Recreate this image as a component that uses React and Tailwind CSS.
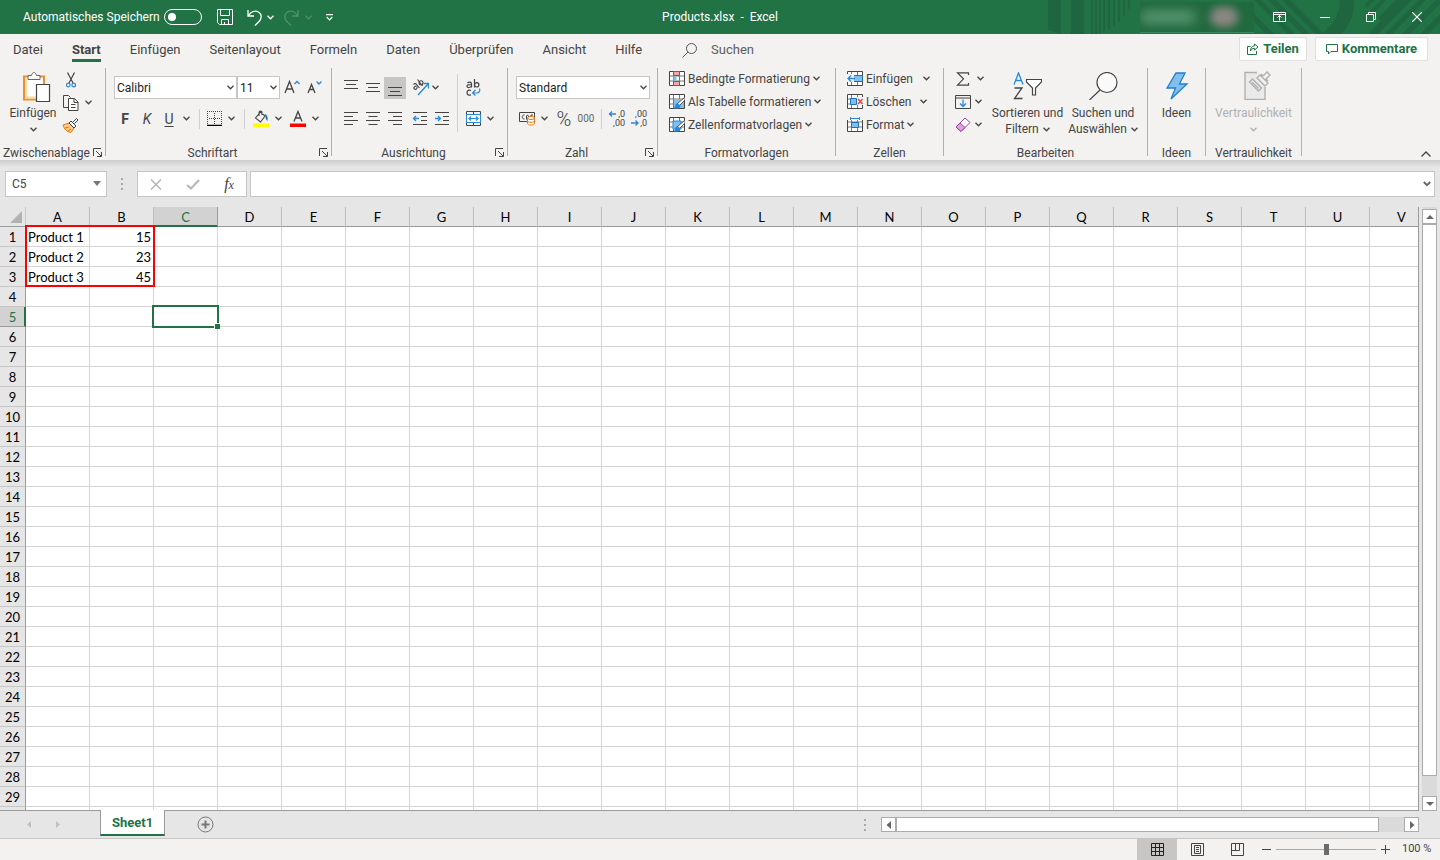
import React from 'react';
import clsx from 'clsx';

const COLUMNS = 'ABCDEFGHIJKLMNOPQRSTUV'.split('');
const FULL_ROWS = 29;
const ROWS = Array.from({ length: FULL_ROWS + 1 }, (_, i) => i + 1);
const DATA = {
  A1: 'Product 1',
  B1: '15',
  A2: 'Product 2',
  B2: '23',
  A3: 'Product 3',
  B3: '45',
};
const TABS = ['Datei', 'Start', 'Einfügen', 'Seitenlayout', 'Formeln', 'Daten', 'Überprüfen', 'Ansicht', 'Hilfe'];

const Chevron = ({ className }) => (
  <svg width="7" height="5" viewBox="0 0 7 5" fill="none" stroke="currentColor" strokeWidth="1.3" className={clsx('shrink-0', className)}>
    <path d="M.5.8l3 3 3-3" />
  </svg>
);

const MenuButton = ({ label, className }) => (
  <button aria-label={label} className={clsx('flex h-[22px] w-3 shrink-0 items-center justify-center', className)}>
    <Chevron />
  </button>
);

const IconButton = ({ label, className, children }) => (
  <button aria-label={label} className={clsx('flex h-[22px] w-[22px] shrink-0 items-center justify-center', className)}>
    {children}
  </button>
);

const Divider = ({ className }) => <div className={clsx('w-px shrink-0 bg-[#d2d0ce]', className)} />;

/* Ribbon group: content, caption, optional dialog launcher, trailing rule */
const Group = ({ title, launcher, className, children }) => (
  <>
    <section className={clsx('flex shrink-0 flex-col', className)}>
      <div className="flex h-[77px]">{children}</div>
      <div className="flex h-[15px] items-center">
        <span className="flex-1 text-center whitespace-nowrap">{title}</span>
        {launcher && (
          <button aria-label={`${title} Optionen`} className="mr-[3px] shrink-0">
            <svg width="9" height="9" viewBox="0 0 9 9" fill="none" stroke="currentColor">
              <path d="M.5 8V.5H8M3 3l5 5M8.500 4v4.500H4" />
            </svg>
          </button>
        )}
      </div>
    </section>
    <div className="h-[88px] w-px shrink-0 bg-[#b3b0ad]" />
  </>
);

const Lines = ({ d }) => (
  <svg width="16" height="16" viewBox="0 0 16 16" fill="none" stroke="#444" className="shrink-0">
    <path d={d} />
  </svg>
);

const GridIcon = ({ children }) => (
  <svg width="16" height="15" viewBox="0 0 16 15" fill="none" className="shrink-0">
    <path d="M.5.500h15v14H.5z" fill="#fff" stroke="#444" />
    <path d="M1 5h14M1 10h14M4.500 1v13M10.500 1v13" stroke="#777" />
    {children}
  </svg>
);

const Brush = () => (
  <>
    <path d="M16 3L8 10l2 2 6-6z" fill="#fff" stroke="#444" strokeWidth=".9" />
    <path d="M9 9.500c-2-.5-3 1-3 2.500 0 1-1 2-2 2.500h4c2.500 0 4-1.500 3-3.500z" fill="#2b88d8" />
  </>
);

const TitlePattern = () => (
  <svg className="absolute top-0 right-0" width="400" height="34" viewBox="0 0 400 34" aria-hidden="true">
    <g fill="#1f6540">
      <path d="M8 0h13v34l-13-4zM31 0h13v34H31zM51 0h2v34h-2zM55 0h2v34h-2zM59 0h2v33h-2zM63 0h2v31h-2zM68 0h2v29h-2zM73 0h2v26h-2zM78 0h2v22h-2zM83 0h2v16h-2zM88 0h2v9h-2z" />
      <path d="M214 0h7l34 34h-7zM228 0h8l34 34h-8zM242 0h8l34 34h-8zM214 14l20 20h-8l-12-12zM300 0h14c1 14-4 25-13 34h-20c12-8 19-20 19-34z" />
      <path d="M325 4l5-4h5l-9 8zM330 11l11-11h5L333 14zM338 18l18-18h6l-21 21zM328 34l34-34h10l-34 34zM345 34l34-34h7l-34 34zM362 34l34-34h4v4l-30 30zM380 34l20-20v8l-12 12z" />
    </g>
  </svg>
);

const TitleBar = () => (
  <header className="relative flex h-[34px] shrink-0 items-center bg-[#217346] text-white">
    <TitlePattern />
    <div className="flex flex-1 items-center">
      <label htmlFor="autosave" className="ml-[23px] w-[141px] whitespace-nowrap">Automatisches Speichern</label>
      <span className="relative flex h-4 w-[38px] items-center">
        <input id="autosave" type="checkbox" className="h-4 w-[38px] appearance-none rounded-full border border-white" />
        <span className="pointer-events-none absolute left-1 h-2 w-2 rounded-full bg-white" />
      </span>
      <IconButton label="Speichern" className="ml-3">
        <svg width="16" height="16" viewBox="0 0 16 16" fill="none" stroke="#fff">
          <path d="M.5.500h15v15h-13l-2-2zM3.500.5v6h9v-6M4.500 15.500v-5h7v5M7.500 13v2.500" />
        </svg>
      </IconButton>
      <IconButton label="Rückgängig" className="ml-2">
        <svg width="16" height="17" viewBox="0 0 16 17" fill="none" stroke="#fff" strokeWidth="1.3">
          <path d="M1 1v6h6M1.500 6.500C4 3 8 1 11.500 3c4 2.500 3 7 .5 9.500L8 16.500" />
        </svg>
      </IconButton>
      <MenuButton label="Rückgängig-Liste" className="-ml-0.5" />
      <IconButton label="Wiederholen" className="ml-1 text-[#4f9069]">
        <svg width="16" height="17" viewBox="0 0 16 17" fill="none" stroke="currentColor" strokeWidth="1.3">
          <path d="M15 1v6H9M14.500 6.500C12 3 8 1 4.500 3c-4 2.500-3 7-.5 9.500L8 16.500" />
        </svg>
      </IconButton>
      <MenuButton label="Wiederholen-Liste" className="text-[#4f9069]" />
      <IconButton label="Symbolleiste anpassen" className="ml-1">
        <svg width="7" height="7" viewBox="0 0 7 7" fill="none" stroke="#fff" strokeWidth="1.2">
          <path d="M0 .6h7M.7 3l2.800 2.800L6.300 3" />
        </svg>
      </IconButton>
    </div>
    <h1 className="whitespace-pre">Products.xlsx  -  Excel</h1>
    <div className="relative flex flex-1 items-center justify-end">
      <div className="mr-0.5 flex h-[31px] w-[114px] items-center justify-between overflow-hidden border-b border-[#398a5e] bg-[#21693f] pr-4">
        <span className="h-3 w-14 rounded-full bg-[#5d9a76] blur-[6px]" />
        <span className="h-5 w-7 rounded-full bg-[#8b8782] blur-[4px]" />
      </div>
      <button aria-label="Menübandoptionen" className="flex h-[34px] w-[46px] items-center justify-center">
        <svg width="13" height="10" viewBox="0 0 13 10" fill="none" stroke="#fff">
          <path d="M.5.500h12v9H.5zM.5 2.500h12M6.500 8.500v-5M4.500 5.500l2-2 2 2" />
        </svg>
      </button>
      <button aria-label="Minimieren" className="flex h-[34px] w-[46px] items-center justify-center">
        <svg width="10" height="1"><path d="M0 .5h10" stroke="#fff" /></svg>
      </button>
      <button aria-label="Wiederherstellen" className="flex h-[34px] w-[46px] items-center justify-center">
        <svg width="10" height="10" viewBox="0 0 10 10" fill="none" stroke="#fff">
          <path d="M.5 2.500h7v7h-7zM2.500 2.500v-2h7v7h-2" />
        </svg>
      </button>
      <button aria-label="Schließen" className="flex h-[34px] w-[46px] items-center justify-center">
        <svg width="10" height="10" viewBox="0 0 10 10" stroke="#fff" strokeWidth="1.200"><path d="M0 0l10 10M10 0L0 10" /></svg>
      </button>
    </div>
  </header>
);

const TabBar = () => (
  <nav className="flex h-[34px] shrink-0 items-start pl-[13px] text-[13px]">
    <div className="flex flex-1 items-start gap-[29px]">
      {TABS.map((tab) => (
        <a
          key={tab}
          href="#"
          className={clsx(
            'mt-1 h-6 border-b-3 whitespace-nowrap leading-6',
            tab === 'Start' ? 'border-[#217346] font-bold' : 'border-transparent'
          )}
        >
          {tab}
        </a>
      ))}
      <label className="mt-1 ml-[11px] flex h-6 items-center gap-[14px]">
        <svg width="15" height="15" viewBox="0 0 15 15" fill="none" stroke="#555">
          <circle cx="9.500" cy="5.500" r="5" />
          <path d="M6 9L.5 14.500" />
        </svg>
        <input aria-label="Suchen" placeholder="Suchen" className="w-24 bg-transparent outline-none placeholder:text-[#605e5c]" />
      </label>
    </div>
    <div className="mt-[3px] mr-3 flex gap-2 font-bold text-[#217346]">
      <button className="flex h-6 w-[68px] items-center justify-center gap-1 rounded-xs border border-[#e1dfdd] bg-white">
        <svg width="12" height="12" viewBox="0 0 12 12" fill="none" stroke="currentColor">
          <path d="M3.500 3.500h-3v8h9V8M7.500 1l3.500 3-3.500 3V5.300C5 5.300 4 6.500 3.500 8c0-3 1.500-5 4-5.200z" />
        </svg>
        Teilen
      </button>
      <button className="flex h-6 w-[113px] items-center justify-center gap-1 rounded-xs border border-[#e1dfdd] bg-white">
        <svg width="12" height="12" viewBox="0 0 12 12" fill="none" stroke="currentColor">
          <path d="M.5 1.500h11v7H5l-2.500 2.500V8.500h-2z" />
        </svg>
        Kommentare
      </button>
    </div>
  </nav>
);

const Select = ({ label, value, className }) => (
  <span className={clsx('relative flex h-[23px] shrink-0 items-center', className)}>
    <select aria-label={label} className="h-full w-full appearance-none border border-[#c8c6c4] bg-white pl-[2px] text-[#222]">
      <option>{value}</option>
    </select>
    <Chevron className="pointer-events-none absolute right-[3px]" />
  </span>
);

const ClipboardGroup = () => (
  <Group title="Zwischenablage" launcher className="w-[105px]">
    <button className="flex w-[66px] flex-col items-center pt-1">
      <svg width="28" height="30" viewBox="0 0 28 30" fill="none" className="ml-[7px]">
        <path d="M1 4.500h20v23H1z" fill="#fff" stroke="#e8912d" strokeWidth="2" />
        <path d="M3 6.500v19h16" stroke="#fbd9a0" strokeWidth="2" />
        <path d="M5 7.500v-4h3.500C9 1.500 10 .5 11 .5s2 1 2.500 3H17v4z" fill="#fff" stroke="#666" />
        <path d="M13.500 12.500h13v17h-13z" fill="#fff" stroke="#444" strokeWidth="1.200" />
      </svg>
      <span className="mt-[3px] leading-4">Einfügen</span>
      <Chevron className="mt-[6px]" />
    </button>
    <div className="flex flex-col">
      <div className="flex h-[23px] items-center">
        <button aria-label="Ausschneiden">
          <svg width="10" height="16" viewBox="0 0 10 16" fill="none">
            <path d="M1.500.5L7 11M8.500.5L3 11" stroke="#444" strokeWidth="1.200" />
            <circle cx="2.300" cy="13" r="1.800" stroke="#2b88d8" strokeWidth="1.200" />
            <circle cx="7.700" cy="13" r="1.800" stroke="#2b88d8" strokeWidth="1.200" />
          </svg>
        </button>
      </div>
      <div className="flex h-[23px] items-center">
        <button aria-label="Kopieren" className="-ml-1">
          <svg width="17" height="16" viewBox="0 0 17 16" fill="none" stroke="#444">
            <path d="M6.500 12.500h-5V.5h5l2 2" />
            <path d="M6.500 3.500h6l3.500 3.500v8.500H6.500zM12 3.500v4h4M9 9.500h4.500M9 12.500h4.500" fill="#fff" />
          </svg>
        </button>
        <MenuButton label="Kopieroptionen" className="ml-[3px]" />
      </div>
      <div className="flex h-[23px] items-center">
        <button aria-label="Format übertragen" className="-ml-1">
          <svg width="17" height="15" viewBox="0 0 17 15" fill="none">
            <path d="M1 7l6-2 5 5-3 4.500c-4-.5-7-3.500-8-7.500z" fill="#fbc98b" stroke="#e07a10" />
            <path d="M3 10l4-1M6 13l3-2" stroke="#e07a10" />
            <path d="M7 5l2-2 5 5-2 2zM11 4l3.500-3.500L16 2l-3.500 3.500" fill="#fff" stroke="#444" />
          </svg>
        </button>
      </div>
    </div>
  </Group>
);

const FontGroup = () => (
  <Group title="Schriftart" launcher className="w-[225px]">
    <div className="flex flex-col pl-2">
      <div className="mt-2 flex h-[23px] items-center">
        <Select label="Schriftart" value="Calibri" className="w-[123px]" />
        <Select label="Schriftgrad" value="11" className="w-[43px]" />
        <IconButton label="Schriftgrad vergrößern" className="ml-px">
          <svg width="16" height="16" viewBox="0 0 16 16" fill="none" stroke="#444" strokeWidth="1.300">
            <path d="M1 13L5.500 1.500 10 13M2.800 9h5.400" />
            <path d="M10.500 4L13 1.500 15.500 4" stroke="#2b88d8" />
          </svg>
        </IconButton>
        <IconButton label="Schriftgrad verkleinern" className="ml-px">
          <svg width="16" height="16" viewBox="0 0 16 16" fill="none" stroke="#444" strokeWidth="1.300">
            <path d="M1 13L4.500 4.500 8 13M2.500 9.500h4.500" />
            <path d="M9.500 1.500L12 4 14.500 1.500" stroke="#2b88d8" />
          </svg>
        </IconButton>
      </div>
      <div className="mt-2 flex h-[23px] items-center text-sm">
        <IconButton label="Fett"><span className="font-bold">F</span></IconButton>
        <IconButton label="Kursiv"><span className="italic">K</span></IconButton>
        <IconButton label="Unterstrichen"><span className="underline underline-offset-2">U</span></IconButton>
        <MenuButton label="Unterstreichungsart" />
        <Divider className="mr-[3px] ml-[7px] h-5" />
        <IconButton label="Rahmen">
          <svg width="15" height="15" viewBox="0 0 15 15" fill="none" stroke="#444">
            <path d="M.5 0v14M14.500 0v14M0 .5h15M7.500 2v12M2 7.500h12" strokeDasharray="1 1" />
            <path d="M0 14.500h15" stroke="#000" strokeWidth="1.500" />
          </svg>
        </IconButton>
        <MenuButton label="Rahmenarten" />
        <Divider className="mr-[5px] ml-[7px] h-5" />
        <IconButton label="Füllfarbe">
          <svg width="16" height="17" viewBox="0 0 16 17" fill="none">
            <path d="M7.500 2L2.500 8l5 4 4.500-6zM6 6V2.500C6 .5 9 .5 9 2.500V5" stroke="#444" strokeWidth="1.100" />
            <path d="M11.500 4c3 .5 3.500 3.500 3 7-1.500-1-2-3-2-5z" fill="#1e6fb8" />
            <path d="M0 13.500h16V17H0z" fill="#ff0" />
          </svg>
        </IconButton>
        <MenuButton label="Füllfarben" />
        <IconButton label="Schriftfarbe" className="ml-[3px]">
          <svg width="16" height="17" viewBox="0 0 16 17" fill="none">
            <path d="M4 11.500L8 1.500l4 10M5.300 8h5.400" stroke="#444" strokeWidth="1.300" />
            <path d="M0 13.500h16V17H0z" fill="red" />
          </svg>
        </IconButton>
        <MenuButton label="Schriftfarben" />
      </div>
    </div>
  </Group>
);

const AlignGroup = () => (
  <Group title="Ausrichtung" launcher className="w-[175px]">
    <div className="flex w-[125px] flex-col pl-2">
      <div className="mt-2 flex h-[23px] items-center">
        <IconButton label="Oben ausrichten"><Lines d="M1 .5h14M3 4.500h10M1 8.500h14" /></IconButton>
        <IconButton label="Zentriert ausrichten"><Lines d="M1 3.500h14M3 7.500h10M1 11.500h14" /></IconButton>
        <IconButton label="Unten ausrichten" className="bg-[#c8c6c4]"><Lines d="M1 7.500h14M3 11.500h10M1 15.500h14" /></IconButton>
        <IconButton label="Ausrichtung" className="ml-[3px]">
          <svg width="17" height="17" viewBox="0 0 17 17" fill="none">
            <g stroke="#444" strokeWidth="1.100">
              <path d="M1.500 5.500c1-1.500 2.500-1 3.500.5l2.500 3M4.500 7c-2 0-3.500 2-2 3s3-.5 2.500-2.500M5.500.5l5 6.500" />
              <circle cx="9" cy="3.800" r="2" />
            </g>
            <path d="M6 16L16 5M11.500 4.500H16.500v5" stroke="#2b88d8" strokeWidth="1.300" />
          </svg>
        </IconButton>
        <MenuButton label="Ausrichtungsoptionen" className="-ml-0.5" />
      </div>
      <div className="mt-2 flex h-[23px] items-center">
        <IconButton label="Linksbündig"><Lines d="M1 1.500h14M1 5.500h9M1 9.500h14M1 13.500h9" /></IconButton>
        <IconButton label="Zentriert"><Lines d="M1 1.500h14M3.500 5.500h9M1 9.500h14M3.500 13.500h9" /></IconButton>
        <IconButton label="Rechtsbündig"><Lines d="M1 1.500h14M6 5.500h9M1 9.500h14M6 13.500h9" /></IconButton>
        <IconButton label="Einzug verkleinern" className="ml-[3px]">
          <svg width="16" height="16" viewBox="0 0 16 16" fill="none" stroke="#444">
            <path d="M1 1.500h14M9 5.500h6M9 9.500h6M1 13.500h14" />
            <path d="M7 7.500H1.500M4 5L1.500 7.500 4 10" stroke="#2b88d8" strokeWidth="1.300" />
          </svg>
        </IconButton>
        <IconButton label="Einzug vergrößern">
          <svg width="16" height="16" viewBox="0 0 16 16" fill="none" stroke="#444">
            <path d="M1 1.500h14M9 5.500h6M9 9.500h6M1 13.500h14" />
            <path d="M1 7.500h5.500M4 5l2.500 2.500L4 10" stroke="#2b88d8" strokeWidth="1.300" />
          </svg>
        </IconButton>
      </div>
    </div>
    <Divider className="mt-[6px] h-[58px]" />
    <div className="flex flex-col pl-1">
      <div className="mt-2 flex h-[23px] items-center">
        <IconButton label="Textumbruch">
          <svg width="15" height="17" viewBox="0 0 15 17" fill="none" stroke="#444" strokeWidth="1.200">
            <path d="M1.500 4C3 2.500 5.500 3 5.500 5v3.500M5.500 5.500C2 5.500 1 6 1 7.200 1 9 4.500 9 5.500 7M8.500 0v8.500" />
            <circle cx="10.700" cy="5.800" r="2.200" />
            <path d="M5 11.500c-2-1-4 0-4 2.200s2 3 4 2" />
            <path d="M13.500 9.500c1 2.500 0 4.500-3 4.500H7M9.500 11L6.500 14l3 2.500" stroke="#2b88d8" />
          </svg>
        </IconButton>
      </div>
      <div className="mt-2 flex h-[23px] items-center">
        <IconButton label="Verbinden und zentrieren">
          <svg width="15" height="15" viewBox="0 0 15 15" fill="none">
            <path d="M.5.500h14v14H.5zM7.500.5v3M7.500 11.500v3" stroke="#444" />
            <path d="M.5 3.500h14v8H.5z" fill="#fff" stroke="#2b88d8" />
            <path d="M3 7.500h9M5 5.500l-2 2 2 2M10 5.500l2 2-2 2" stroke="#2b88d8" strokeWidth="1.200" />
          </svg>
        </IconButton>
        <MenuButton label="Verbindungsoptionen" />
      </div>
    </div>
  </Group>
);

const DecimalIcon = ({ top, bottom, d }) => (
  <svg width="18" height="20" viewBox="0 0 18 20" fill="none" className="overflow-visible">
    <g fill="#444" fontSize="9">
      <text x="17" y="8" textAnchor="end">{top}</text>
      <text x="17" y="17" textAnchor="end">{bottom}</text>
    </g>
    <path d={d} stroke="#2b88d8" strokeWidth="1.300" />
  </svg>
);

const NumberGroup = () => (
  <Group title="Zahl" launcher className="w-[149px]">
    <div className="flex flex-col pl-2">
      <div className="mt-2 flex h-[23px] items-center">
        <Select label="Zahlenformat" value="Standard" className="w-[134px]" />
      </div>
      <div className="mt-2 flex h-[23px] items-center">
        <IconButton label="Buchhaltungszahlenformat">
          <svg width="17" height="15" viewBox="0 0 17 15" fill="none">
            <path d="M.5 1.500h15v9H.5z" stroke="#444" />
            <path d="M5.500 4c-3-.5-3 4.500 0 4M7.500 8.500V5c0-1 2-1 2 0v3.500M12 8V4h2" stroke="#444" />
            <path d="M8.500 7v5.500c0 2 7 2 7 0V7" fill="#fff" stroke="#e07a10" />
            <ellipse cx="12" cy="7" rx="3.500" ry="1.500" fill="#fff" stroke="#e07a10" />
            <path d="M8.500 9.800c0 2 7 2 7 0" stroke="#e07a10" />
          </svg>
        </IconButton>
        <MenuButton label="Währungen" />
        <IconButton label="Prozent" className="ml-[3px] text-xl font-light">%</IconButton>
        <IconButton label="Tausendertrennzeichen" className="text-[10px] text-[#666]">000</IconButton>
        <Divider className="mx-1 h-5" />
        <IconButton label="Dezimalstelle hinzufügen"><DecimalIcon top=",0" bottom=",00" d="M8 5H1.500M4 2.500L1.500 5 4 7.500" /></IconButton>
        <IconButton label="Dezimalstelle entfernen"><DecimalIcon top=",00" bottom=",0" d="M1 14h7M5.500 11.500L8 14 5.500 16.500" /></IconButton>
      </div>
    </div>
  </Group>
);

const StylesGroup = () => (
  <Group title="Formatvorlagen" className="w-[177px]">
    <div className="-mt-px flex flex-col items-start pl-[11px]">
      <button className="flex h-[23px] items-center gap-[3px]">
        <GridIcon>
          <path d="M4.500.5h6v4h-6zM4.500 10.500h6v4h-6z" fill="#f4a6a0" stroke="#d9342b" />
          <path d="M4.500 5v5h3V5z" fill="#83beec" />
        </GridIcon>
        <span>Bedingte Formatierung</span>
        <Chevron />
      </button>
      <button className="flex h-[23px] items-center gap-[3px]">
        <GridIcon>
          <path d="M5 5h10v9H5z" fill="#83beec" />
          <Brush />
        </GridIcon>
        <span>Als Tabelle formatieren</span>
        <Chevron />
      </button>
      <button className="flex h-[23px] items-center gap-[3px]">
        <GridIcon>
          <path d="M4 4h8v8H4z" fill="#83beec" stroke="#2b88d8" />
          <Brush />
        </GridIcon>
        <span>Zellenformatvorlagen</span>
        <Chevron />
      </button>
    </div>
  </Group>
);

const CellsGroup = () => (
  <Group title="Zellen" className="w-[107px]">
    <div className="-mt-px flex flex-col items-start pl-[11px]">
      <div className="flex h-[23px] items-center">
        <button className="flex w-[73px] items-center gap-[3px]">
          <GridIcon>
            <path d="M6 4.500h9.500v6H6z" fill="#83beec" stroke="#1e6fb8" />
            <path d="M0 3h7v8H0z" fill="#f3f2f1" />
            <path d="M8 7.500H1M4 4.500l-3 3 3 3" stroke="#2b88d8" strokeWidth="1.300" />
          </GridIcon>
          Einfügen
        </button>
        <MenuButton label="Einfügeoptionen" />
      </div>
      <div className="flex h-[23px] items-center">
        <button className="flex w-[70px] items-center gap-[3px]">
          <GridIcon>
            <path d="M9 3h7v8H9z" fill="#f3f2f1" />
            <path d="M3.500 4.500h6v6h-6z" fill="#83beec" stroke="#1e6fb8" />
            <path d="M11 5l4.500 5M15.500 5L11 10" stroke="#e8424b" strokeWidth="1.400" />
          </GridIcon>
          Löschen
        </button>
        <MenuButton label="Löschoptionen" />
      </div>
      <button className="flex h-[23px] items-center gap-[3px]">
        <GridIcon>
          <path d="M0 0h16v3H0z" fill="#f3f2f1" />
          <path d="M4.500 5.500h7v5h-7z" fill="#83beec" stroke="#1e6fb8" />
          <path d="M3.500 0v3M12.500 0v3M3.500 1.500h9" stroke="#2b88d8" />
        </GridIcon>
        <span>Format</span>
        <Chevron />
      </button>
    </div>
  </Group>
);

const EditGroup = () => (
  <Group title="Bearbeiten" className="w-[203px]">
    <div className="-mt-px flex w-[44px] flex-col pl-2">
      <div className="flex h-[23px] items-center">
        <IconButton label="Summe">
          <svg width="14" height="14" viewBox="0 0 14 14" fill="none" stroke="#444" strokeWidth="1.200">
            <path d="M12.500 3V.8H1.500l6 6-6 6.400h11V11" />
          </svg>
        </IconButton>
        <MenuButton label="Funktionen" />
      </div>
      <div className="flex h-[23px] items-center">
        <IconButton label="Ausfüllen">
          <svg width="16" height="14" viewBox="0 0 16 14" fill="none">
            <path d="M.5.500h15v13H.5zM.5 3h15" stroke="#444" />
            <path d="M8 4.500v7M5 8.500l3 3 3-3" stroke="#2b88d8" strokeWidth="1.300" />
          </svg>
        </IconButton>
        <MenuButton label="Füllrichtung" className="-ml-0.5" />
      </div>
      <div className="flex h-[23px] items-center">
        <IconButton label="Löschen">
          <svg width="16" height="16" viewBox="0 0 16 16" stroke="#a23fa8">
            <path d="M10 1l5 4.500-9 9-5-4.500z" fill="#fff" />
            <path d="M5 6l5 4.500-4 4-5-4.500z" fill="#dca0e0" />
          </svg>
        </IconButton>
        <MenuButton label="Löschumfang" className="-ml-0.5" />
      </div>
    </div>
    <button className="flex w-[79px] flex-col items-center pt-1 leading-4">
      <svg width="29" height="28" viewBox="0 0 29 28" fill="none" strokeWidth="1.300">
        <path d="M1 12.500L5.500 1 10 12.500M2.500 8.500h6" stroke="#2b88d8" />
        <path d="M1.500 16H9L1.500 26.500H9.500" stroke="#444" />
        <path d="M13.500 7.500h15v2.500l-6 6v7h-3v-7l-6-6z" fill="#fff" stroke="#444" strokeWidth="1.200" />
      </svg>
      <span className="mt-[5px] whitespace-nowrap">Sortieren und</span>
      <span className="flex items-center gap-1">Filtern <Chevron /></span>
    </button>
    <button className="flex w-[72px] flex-col items-center pt-1 leading-4">
      <svg width="32" height="28" viewBox="0 0 32 28" fill="none" stroke="#444" strokeWidth="1.200">
        <circle cx="20" cy="10.500" r="10" fill="#fafafa" />
        <path d="M13 18l-10.500 10" />
      </svg>
      <span className="mt-[5px] whitespace-nowrap">Suchen und</span>
      <span className="flex items-center gap-1">Auswählen <Chevron /></span>
    </button>
  </Group>
);

const Ribbon = () => (
  <div className="flex h-[92px] shrink-0 overflow-hidden">
    <ClipboardGroup />
    <FontGroup />
    <AlignGroup />
    <NumberGroup />
    <StylesGroup />
    <CellsGroup />
    <EditGroup />
    <Group title="Ideen" className="w-[57px]">
      <button className="flex w-full flex-col items-center pt-1 leading-4">
        <svg width="24" height="28" viewBox="0 0 24 28" fill="#83beec" stroke="#1e7fd0" strokeWidth="1.300">
          <path d="M11 1h9l-5.500 11H22L6 27l4.500-11H2z" />
        </svg>
        <span className="mt-[5px]">Ideen</span>
      </button>
    </Group>
    <Group title="Vertraulichkeit" className="w-[95px]">
      <button disabled className="flex w-full flex-col items-center pt-[2px] leading-4 text-[#b1b0af]">
        <svg width="27" height="30" viewBox="0 0 27 30" fill="none" stroke="#b1b0af" strokeWidth="1.400" className="ml-[7px]">
          <path d="M13 2.500H1v27h20V17" fill="#eaeaea" />
          <path d="M5.500 12l3-3 9 9-3 3zM8 12l6.500 6.500M13 8l3-3 8 8-3 3zM17 4l2 2M19 6l4-4 3 3-4 4 2 2" />
        </svg>
        <span className="mt-[5px]">Vertraulichkeit</span>
        <Chevron className="mt-[6px]" />
      </button>
    </Group>
    <div className="flex flex-1 items-end justify-end pr-[9px] pb-[3px]">
      <button aria-label="Menüband reduzieren">
        <svg width="10" height="6" viewBox="0 0 10 6" fill="none" stroke="#444" strokeWidth="1.300"><path d="M.5 5.500L5 1l4.500 4.500" /></svg>
      </button>
    </div>
  </div>
);

const Dots = () => (
  <svg width="2" height="12" viewBox="0 0 2 12" fill="#a8a8a8" className="shrink-0">
    <path d="M0 0h2v2H0zM0 5h2v2H0zM0 10h2v2H0z" />
  </svg>
);

const FormulaBar = () => (
  <div className="flex h-[47px] shrink-0 items-start bg-gradient-to-b from-[#cdcccb] from-0% to-[#e6e6e6] to-15% pt-[11px] pr-[5px] pl-[5px]">
    <span className="relative flex h-[26px] w-[102px] items-center">
      <input aria-label="Namenfeld" defaultValue="C5" className="h-full w-full border border-[#c6c6c6] bg-white pl-[6px]" />
      <svg width="8" height="5" className="pointer-events-none absolute right-[6px] mb-0.5" fill="#777"><path d="M0 0h8L4 5z" /></svg>
    </span>
    <span className="flex h-[26px] w-[30px] items-center justify-center"><Dots /></span>
    <div className="mr-[3px] flex h-[26px] w-[110px] items-center justify-around border border-[#c6c6c6] bg-white">
      <button aria-label="Abbrechen">
        <svg width="12" height="11" viewBox="0 0 12 11" stroke="#b9b9b9" strokeWidth="1.600"><path d="M1 .5l10 10M11 .5l-10 10" /></svg>
      </button>
      <button aria-label="Eingeben">
        <svg width="14" height="11" viewBox="0 0 14 11" fill="none" stroke="#b9b9b9" strokeWidth="2.200"><path d="M1 6l4 3.500L13 1" /></svg>
      </button>
      <button aria-label="Funktion einfügen" className="font-['Liberation_Serif',serif] text-base italic">
        f<span className="text-xs">x</span>
      </button>
    </div>
    <span className="relative flex h-[26px] flex-1 items-center">
      <input aria-label="Bearbeitungsleiste" className="h-full w-full border border-[#c6c6c6] bg-white px-2" />
      <svg width="8" height="6" viewBox="0 0 8 6" fill="none" stroke="#666" strokeWidth="1.800" className="pointer-events-none absolute right-1"><path d="M.8 1L4 4.200 7.200 1" /></svg>
    </span>
  </div>
);

const Sheet = () => (
  <div className="min-w-0 flex-1 overflow-hidden border-r border-b border-[#9b9b9b] bg-white font-['Lato',sans-serif] text-[13px] leading-[18px] text-black">
    <table className="w-[1434px] table-fixed border-separate border-spacing-0">
      <colgroup>
        <col className="w-[26px]" />
        {COLUMNS.map((col) => <col key={col} className="w-16" />)}
      </colgroup>
      <thead>
        <tr className="h-5 bg-[#e6e6e6]">
          <th aria-label="Alles auswählen" className="border-r border-b border-[#9b9b9b] border-r-[#c6c6c6] p-0">
            <svg width="12" height="12" className="mr-[3px] ml-auto" fill="#b2b2b2"><path d="M12 0v12H0z" /></svg>
          </th>
          {COLUMNS.map((col) => (
            <th
              key={col}
              className={clsx(
                'border-r border-b px-0 pt-px pb-0 font-normal',
                col === 'C'
                  ? 'border-r-[#9b9b9b] border-b-[#217346] bg-[#d2d2d2] text-[#217346] shadow-[inset_0_-1px_#217346]'
                  : 'border-r-[#bdbdbd] border-b-[#9b9b9b]'
              )}
            >
              {col}
            </th>
          ))}
        </tr>
      </thead>
      <tbody>
        {ROWS.map((row) => (
          <tr key={row} className="h-5">
            <th
              className={clsx(
                'border-r border-b px-0 pt-px pb-0 text-center font-normal',
                row === 5
                  ? 'border-r-[#217346] border-b-[#9b9b9b] bg-[#d2d2d2] text-[#217346] shadow-[inset_-1px_0_#217346]'
                  : 'border-r-[#9b9b9b] border-b-[#c6c6c6] bg-[#e6e6e6]'
              )}
            >
              {row <= FULL_ROWS && row}
            </th>
            {COLUMNS.map((col) => (
              <td
                key={col}
                className={clsx(
                  'relative border-r border-b border-[#d4d4d4] px-0.5 pt-px pb-0 whitespace-nowrap',
                  col === 'B' && 'text-right'
                )}
              >
                {DATA[col + row]}
                {col + row === 'A1' && (
                  <span className="absolute -top-0.5 -left-px z-10 h-[62px] w-[130px] border-2 border-[#f00]" />
                )}
                {col + row === 'C5' && (
                  <span className="absolute -top-0.5 -left-0.5 z-10 h-[23px] w-[67px] border-2 border-[#217346]">
                    <span className="absolute -right-[3px] -bottom-[3px] h-[6px] w-[6px] border-t border-l border-white bg-[#217346]" />
                  </span>
                )}
              </td>
            ))}
          </tr>
        ))}
      </tbody>
    </table>
  </div>
);

const ScrollButton = ({ label, d, className }) => (
  <button aria-label={label} className={clsx('flex h-[15px] w-[15px] shrink-0 items-center justify-center border border-[#ababab] bg-white', className)}>
    <svg width="8" height="8" viewBox="0 0 8 8" fill="#666"><path d={d} /></svg>
  </button>
);

const SheetTabs = () => (
  <div className="flex h-[27px] shrink-0 items-start bg-[#e6e6e6]">
    <div className="flex h-[26px] w-[100px] items-center gap-[25px] pl-[27px]">
      <button aria-label="Vorheriges Blatt"><svg width="4" height="7" fill="#c0c0c0"><path d="M4 0v7L0 3.500z" /></svg></button>
      <button aria-label="Nächstes Blatt"><svg width="4" height="7" fill="#c0c0c0"><path d="M0 0v7l4-3.500z" /></svg></button>
    </div>
    <button className="-mt-px h-[26px] w-[65px] border-x border-b-2 border-x-[#9b9b9b] border-b-[#217346] bg-white pt-0.5 text-[13px] font-bold text-[#217346]">
      Sheet1
    </button>
    <button aria-label="Neues Blatt" className="mt-[5px] ml-8">
      <svg width="17" height="17" viewBox="0 0 17 17" fill="none" stroke="#777">
        <circle cx="8.500" cy="8.500" r="7.500" />
        <path d="M8.500 4.500v8M4.500 8.500h8" strokeWidth="2" />
      </svg>
    </button>
    <div className="flex h-[27px] flex-1 items-center justify-end pr-[21px]">
      <Dots />
      <div className="ml-[15px] flex h-[15px] w-[538px] bg-[#dadada]">
        <ScrollButton label="Nach links" d="M6 0v8L1.500 4z" />
        <div className="h-full w-[483px] border border-[#ababab] bg-white" />
        <ScrollButton label="Nach rechts" d="M2 0v8l4.500-4z" className="ml-auto" />
      </div>
    </div>
  </div>
);

const StatusBar = () => (
  <footer className="flex h-[22px] shrink-0 items-center justify-end border-t border-[#c6c6c6] text-[11px] text-[#444]">
    <button aria-label="Normal" className="flex h-full w-10 items-center justify-center bg-[#c8c6c4]">
      <svg width="13" height="13" viewBox="0 0 13 13" fill="none" stroke="#222"><path d="M.5.500h12v12H.5zM.5 4.500h12M.5 8.500h12M4.500.5v12M8.500.5v12" /></svg>
    </button>
    <button aria-label="Seitenlayout" className="flex h-full w-10 items-center justify-center">
      <svg width="13" height="13" viewBox="0 0 13 13" fill="none" stroke="#444"><path d="M.5.500h12v12H.5zM3.500 2.500h6v8h-6zM5 4.500h3M5 6.500h3M5 8.500h3" /></svg>
    </button>
    <button aria-label="Umbruchvorschau" className="flex h-full w-10 items-center justify-center">
      <svg width="13" height="13" viewBox="0 0 13 13" fill="none" stroke="#444"><path d="M.5.500h12v12H.5zM4.500.5v7M8.500.5v7M.5 7.500h8" /></svg>
    </button>
    <button aria-label="Verkleinern" className="ml-[5px]">
      <svg width="9" height="9" stroke="#444"><path d="M0 4.500h9" /></svg>
    </button>
    <input
      type="range"
      aria-label="Zoom"
      className="mx-[5px] h-3 w-[100px] appearance-none bg-[linear-gradient(#a8a8a8,#a8a8a8)] bg-[length:100%_1px] bg-center bg-no-repeat [&::-webkit-slider-thumb]:h-[11px] [&::-webkit-slider-thumb]:w-[5px] [&::-webkit-slider-thumb]:appearance-none [&::-webkit-slider-thumb]:bg-[#6b6b6b]"
    />
    <button aria-label="Vergrößern">
      <svg width="9" height="9" stroke="#444"><path d="M0 4.500h9M4.500 0v9" /></svg>
    </button>
    <span className="mr-2 ml-3 w-[30px] whitespace-nowrap">100 %</span>
  </footer>
);

const App = () => (
  <div className="flex h-screen flex-col overflow-hidden bg-[#f3f2f1] font-['Roboto',sans-serif] text-xs text-[#444]">
    <TitleBar />
    <TabBar />
    <Ribbon />
    <FormulaBar />
    <main className="flex min-h-0 flex-1 bg-[#e6e6e6]">
      <Sheet />
      <div className="mr-[3px] ml-[3px] flex w-[15px] flex-col bg-[#dadada] pt-[2px]">
        <ScrollButton label="Nach oben" d="M0 6h8L4 2z" />
        <div className="h-[552px] border border-[#ababab] bg-white" />
        <ScrollButton label="Nach unten" d="M0 2h8L4 6z" className="mt-auto" />
      </div>
    </main>
    <SheetTabs />
    <StatusBar />
  </div>
);

export default App;
